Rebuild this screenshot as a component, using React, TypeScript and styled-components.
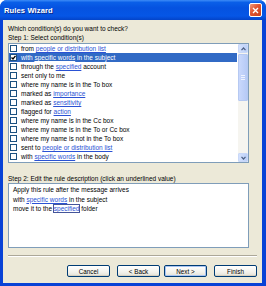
import React from 'react';
import styled, { createGlobalStyle } from 'styled-components';

const GlobalStyle = createGlobalStyle`
  html, body {
    margin: 0;
    padding: 0;
    background: #ffffff;
  }
  * {
    box-sizing: border-box;
  }
`;

const Window = styled.div`
  width: 266px;
  height: 286px;
  display: flex;
  flex-direction: column;
  background: #0842d6;
  border-radius: 7px 7px 0 0;
  overflow: hidden;
  font-family: 'Liberation Sans', Arial, sans-serif;
  font-size: 6.5px;
  color: #000;
`;

const TitleBar = styled.div`
  height: 20px;
  flex: none;
  display: flex;
  align-items: center;
  justify-content: space-between;
  padding: 0 4px 0 4px;
  background: linear-gradient(
    to bottom,
    #3d8cf7 0%,
    #0a5fe8 12%,
    #0552e0 40%,
    #0656e6 80%,
    #0444c8 100%
  );
`;

const Title = styled.span`
  color: #ffffff;
  font-weight: bold;
  font-size: 7.6px;
  letter-spacing: 0.1px;
  text-shadow: 1px 1px 0 #0a2a8a;
`;

const CloseButton = styled.div`
  width: 13px;
  height: 14px;
  border: 1px solid #ffffff;
  border-radius: 2px;
  background: linear-gradient(135deg, #f09a7c 0%, #e0532e 45%, #c6401f 100%);
  display: flex;
  align-items: center;
  justify-content: center;
`;

const Body = styled.div`
  flex: 1;
  margin: 0 4px 3px 3px;
  padding: 4px 5px 0 5px;
  background: #ece9d8;
  display: flex;
  flex-direction: column;
`;

const Label = styled.div<{ $top?: number }>`
  height: 9px;
  line-height: 9px;
  margin-top: ${(p) => p.$top ?? 0}px;
  white-space: nowrap;
`;

const ListBox = styled.div`
  width: 241px;
  height: 120px;
  margin-top: 1px;
  border: 1px solid #7f9db9;
  background: #ffffff;
  display: flex;
`;

const Rows = styled.div`
  flex: 1;
  display: flex;
  flex-direction: column;
  padding-right: 1px;
  overflow: hidden;
`;

const Row = styled.div<{ $selected?: boolean }>`
  height: 9px;
  flex: none;
  display: flex;
  align-items: center;
  gap: 4px;
  padding-left: 1px;
  white-space: nowrap;
  background: ${(p) => (p.$selected ? '#316ac5' : 'transparent')};
  color: ${(p) => (p.$selected ? '#ffffff' : '#000000')};
`;

const CheckBox = styled.span`
  width: 7px;
  height: 7px;
  flex: none;
  border: 1px solid #1c5180;
  background: #ffffff;
  display: flex;
  align-items: center;
  justify-content: center;
`;

const Link = styled.span<{ $light?: boolean; $focus?: boolean }>`
  color: ${(p) => (p.$light ? '#ffffff' : '#2a52d4')};
  text-decoration: underline;
  ${(p) => (p.$focus ? 'outline: 1px solid #44559a; outline-offset: 0px;' : '')}
`;

const ScrollBar = styled.div`
  width: 10px;
  flex: none;
  display: flex;
  flex-direction: column;
  background: #f6f5f0;
`;

const ArrowButton = styled.div`
  height: 9px;
  flex: none;
  border: 1px solid #c9d8f8;
  border-radius: 1px;
  background: linear-gradient(to right, #d4e1fd, #bcd0f8);
  display: flex;
  align-items: center;
  justify-content: center;
`;

const Track = styled.div`
  flex: 1;
  display: flex;
  flex-direction: column;
  padding-top: 1px;
`;

const Thumb = styled.div`
  height: 47px;
  border: 1px solid #b6c9f2;
  border-radius: 1px;
  background: linear-gradient(to right, #c9d8fc, #b6caf6);
  display: flex;
  flex-direction: column;
  align-items: center;
  justify-content: center;
  gap: 1px;
`;

const Grip = styled.span`
  width: 4px;
  height: 1px;
  background: #eef3ff;
`;

const DescBox = styled.div`
  width: 241px;
  height: 65px;
  border: 1px solid #7f9db9;
  background: #ffffff;
  padding: 1px 0 0 4px;
  display: flex;
  flex-direction: column;
`;

const DescLine = styled.div`
  height: 9.5px;
  line-height: 9.5px;
  white-space: nowrap;
`;

const Separator = styled.div`
  height: 2px;
  margin-top: 7px;
  border-top: 1px solid #aca899;
  border-bottom: 1px solid #ffffff;
`;

const ButtonRow = styled.div`
  margin-top: 8px;
  display: flex;
  justify-content: flex-end;
`;

const Button = styled.div<{ $gap?: number; $focused?: boolean }>`
  width: 43px;
  height: 12px;
  margin-left: ${(p) => p.$gap ?? 0}px;
  border: 1px solid #003c74;
  border-radius: 2px;
  background: linear-gradient(to bottom, #ffffff 0%, #f3f2ec 60%, #e3e1d6 100%);
  display: flex;
  align-items: center;
  justify-content: center;
  font-size: 6.3px;
  box-shadow: ${(p) =>
    p.$focused ? 'inset 0 0 0 1px #a8c4f2' : 'inset 0 -1px 0 #d6d0c0'};
`;

type Part = { text: string; link?: boolean };

const conditions: Part[][] = [
  [{ text: 'from ' }, { text: 'people or distribution list', link: true }],
  [
    { text: 'with ' },
    { text: 'specific words', link: true },
    { text: ' in the subject' },
  ],
  [
    { text: 'through the ' },
    { text: 'specified', link: true },
    { text: ' account' },
  ],
  [{ text: 'sent only to me' }],
  [{ text: 'where my name is in the To box' }],
  [{ text: 'marked as ' }, { text: 'importance', link: true }],
  [{ text: 'marked as ' }, { text: 'sensitivity', link: true }],
  [{ text: 'flagged for ' }, { text: 'action', link: true }],
  [{ text: 'where my name is in the Cc box' }],
  [{ text: 'where my name is in the To or Cc box' }],
  [{ text: 'where my name is not in the To box' }],
  [{ text: 'sent to ' }, { text: 'people or distribution list', link: true }],
  [
    { text: 'with ' },
    { text: 'specific words', link: true },
    { text: ' in the body' },
  ],
];

const Chevron = ({ up }: { up?: boolean }) => (
  <svg width="5" height="4" viewBox="0 0 5 4">
    <path
      d={up ? 'M0.5 3.2 L2.5 1 L4.5 3.2' : 'M0.5 0.8 L2.5 3 L4.5 0.8'}
      fill="none"
      stroke="#4d6185"
      strokeWidth="1.2"
    />
  </svg>
);

export default function App() {
  return (
    <>
      <GlobalStyle />
      <Window>
        <TitleBar>
          <Title>Rules Wizard</Title>
          <CloseButton>
            <svg width="7" height="7" viewBox="0 0 7 7">
              <path d="M1 1 L6 6 M6 1 L1 6" stroke="#ffffff" strokeWidth="1.4" />
            </svg>
          </CloseButton>
        </TitleBar>
        <Body>
          <Label>Which condition(s) do you want to check?</Label>
          <Label>Step 1: Select condition(s)</Label>
          <ListBox>
            <Rows>
              {conditions.map((parts, i) => {
                const selected = i === 1;
                return (
                  <Row key={i} $selected={selected}>
                    <CheckBox>
                      {selected && (
                        <svg width="5" height="5" viewBox="0 0 5 5">
                          <path
                            d="M0.5 2.5 L2 4 L4.5 0.8"
                            fill="none"
                            stroke="#000"
                            strokeWidth="1.3"
                          />
                        </svg>
                      )}
                    </CheckBox>
                    <span>
                      {parts.map((p, j) =>
                        p.link ? (
                          <Link key={j} $light={selected}>
                            {p.text}
                          </Link>
                        ) : (
                          <span key={j}>{p.text}</span>
                        )
                      )}
                    </span>
                  </Row>
                );
              })}
            </Rows>
            <ScrollBar>
              <ArrowButton>
                <Chevron up />
              </ArrowButton>
              <Track>
                <Thumb>
                  <Grip />
                  <Grip />
                  <Grip />
                </Thumb>
              </Track>
              <ArrowButton>
                <Chevron />
              </ArrowButton>
            </ScrollBar>
          </ListBox>
          <Label $top={11}>
            Step 2: Edit the rule description (click an underlined value)
          </Label>
          <DescBox>
            <DescLine>Apply this rule after the message arrives</DescLine>
            <DescLine>
              with <Link>specific words</Link> in the subject
            </DescLine>
            <DescLine>
              move it to the <Link $focus>specified</Link> folder
            </DescLine>
          </DescBox>
          <Separator />
          <ButtonRow>
            <Button>Cancel</Button>
            <Button $gap={7}>&lt; Back</Button>
            <Button $gap={4} $focused>
              Next &gt;
            </Button>
            <Button $gap={7}>Finish</Button>
          </ButtonRow>
        </Body>
      </Window>
    </>
  );
}
